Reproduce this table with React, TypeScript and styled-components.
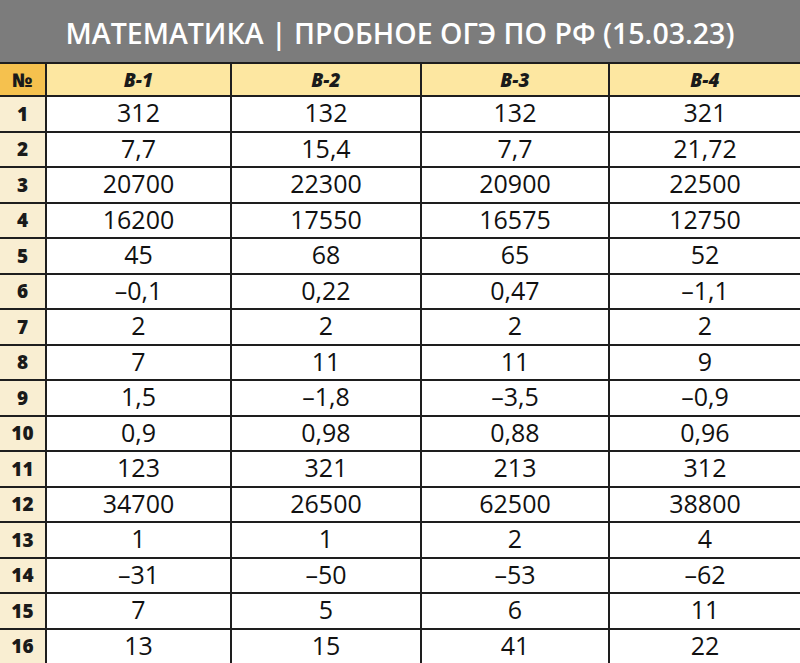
import React from 'react';
import styled, { createGlobalStyle } from 'styled-components';

const GlobalStyle = createGlobalStyle`
  html, body {
    margin: 0;
    padding: 0;
    background: #ffffff;
  }
  body {
    font-family: 'Open Sans', 'Liberation Sans', sans-serif;
    overflow: hidden;
  }
`;

const Page = styled.div`
  width: 800px;
  height: 663px;
  overflow: hidden;
  background: #ffffff;
`;

const TitleBar = styled.div`
  height: 63px;
  background: #7c7c7c;
  display: flex;
  align-items: center;
  justify-content: center;
  color: #ffffff;
  font-size: 28.5px;
  font-weight: 600;
  padding-top: 2px;
  box-sizing: border-box;
`;

const Table = styled.table`
  width: 801px;
  border-collapse: collapse;
  table-layout: fixed;
  margin-top: -1px;
`;

const HeadCell = styled.th<{ $corner?: boolean }>`
  height: 31px;
  padding: 0;
  border: 2px solid #1e1e1e;
  background: ${(p) => (p.$corner ? '#f5c14e' : '#fde7a1')};
  font-size: 19px;
  font-weight: 800;
  font-style: ${(p) => (p.$corner ? 'normal' : 'italic')};
  color: #1a1a1a;
  text-align: center;
  &:first-child {
    border-left: none;
  }
`;

const NumCell = styled.td`
  height: 33.5px;
  padding: 0;
  border: 2px solid #1e1e1e;
  border-left: none;
  background: #f9eed2;
  font-size: 19px;
  font-weight: 800;
  color: #1a1a1a;
  text-align: center;
`;

const Cell = styled.td`
  padding: 0 0 2px;
  border: 2px solid #1e1e1e;
  background: #ffffff;
  font-size: 25px;
  font-weight: 400;
  color: #111111;
  text-align: center;
  line-height: 1;
`;

const answers: string[][] = [
  ['312', '132', '132', '321'],
  ['7,7', '15,4', '7,7', '21,72'],
  ['20700', '22300', '20900', '22500'],
  ['16200', '17550', '16575', '12750'],
  ['45', '68', '65', '52'],
  ['–0,1', '0,22', '0,47', '–1,1'],
  ['2', '2', '2', '2'],
  ['7', '11', '11', '9'],
  ['1,5', '–1,8', '–3,5', '–0,9'],
  ['0,9', '0,98', '0,88', '0,96'],
  ['123', '321', '213', '312'],
  ['34700', '26500', '62500', '38800'],
  ['1', '1', '2', '4'],
  ['–31', '–50', '–53', '–62'],
  ['7', '5', '6', '11'],
  ['13', '15', '41', '22'],
];

export default function App() {
  return (
    <Page>
      <GlobalStyle />
      <TitleBar>МАТЕМАТИКА | ПРОБНОЕ ОГЭ ПО РФ (15.03.23)</TitleBar>
      <Table>
        <colgroup>
          <col style={{ width: 46 }} />
          <col style={{ width: 185 }} />
          <col style={{ width: 190 }} />
          <col style={{ width: 188 }} />
          <col style={{ width: 192 }} />
        </colgroup>
        <thead>
          <tr>
            <HeadCell $corner>№</HeadCell>
            <HeadCell>В-1</HeadCell>
            <HeadCell>В-2</HeadCell>
            <HeadCell>В-3</HeadCell>
            <HeadCell>В-4</HeadCell>
          </tr>
        </thead>
        <tbody>
          {answers.map((row, i) => (
            <tr key={i}>
              <NumCell>{i + 1}</NumCell>
              {row.map((v, j) => (
                <Cell key={j}>{v}</Cell>
              ))}
            </tr>
          ))}
        </tbody>
      </Table>
    </Page>
  );
}
